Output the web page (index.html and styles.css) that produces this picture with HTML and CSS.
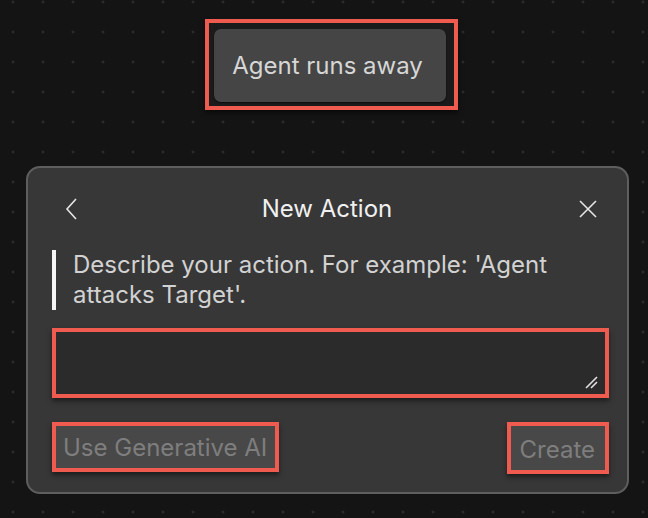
FILE: index.html
```html
<!DOCTYPE html>
<html>
<head>
<meta charset="utf-8">
<link rel="stylesheet" href="styles.css">
</head>
<body>
<div class="canvas">
  <div class="node-wrap">
    <div class="hl node-hl">
      <button class="node">Agent runs away</button>
    </div>
  </div>
  <div class="panel">
    <div class="panel-head">
      <span class="icon-btn">
        <svg width="14" height="22" viewBox="0 0 14 22"><path d="M11 1 L2 11 L11 21" fill="none" stroke="#e6e6e6" stroke-width="1.6"/></svg>
      </span>
      <div class="title">New Action</div>
      <span class="icon-btn">
        <svg width="18" height="18" viewBox="0 0 18 18"><path d="M1 1 L17 17 M17 1 L1 17" fill="none" stroke="#e6e6e6" stroke-width="1.6"/></svg>
      </span>
    </div>
    <div class="desc">Describe your action. For example: 'Agent attacks Target'.</div>
    <div class="hl field-hl">
      <div class="field">
        <svg class="grip" width="14" height="14" viewBox="0 0 14 14"><path d="M1 12 L12 1 M6 12 L12 6" stroke="#e0e0e0" stroke-width="1.6" fill="none"/></svg>
      </div>
    </div>
    <div class="actions">
      <div class="hl btn-hl"><button class="btn">Use Generative AI</button></div>
      <div class="hl btn-hl"><button class="btn btn-create">Create</button></div>
    </div>
  </div>
</div>
</body>
</html>
```
FILE: styles.css
```css
html, body {
  margin: 0;
  padding: 0;
}
body {
  width: 648px;
  height: 518px;
  overflow: hidden;
  background-color: #141414;
  background-image: radial-gradient(circle at 15px 15px, #2e2e2e 0, #2a2a2a 1px, rgba(20,20,20,0) 1.8px);
  background-size: 30px 30px;
  background-position: -2px -13px;
  font-family: Inter, "Noto Sans", sans-serif;
}
.canvas {
  display: flex;
  flex-direction: column;
  padding-top: 19px;
}
.node-wrap {
  display: flex;
  justify-content: center;
  padding-left: 14px;
}
.hl {
  border: 4px solid #ef5b4f;
  box-shadow: 0 3px 5px rgba(0,0,0,0.5);
}
.node-hl {
  padding: 6px 8px 4px 5px;
  background: #1b1b1b;
}
.node {
  display: block;
  width: 232px;
  height: 73px;
  border: none;
  border-radius: 7px;
  background: #454545;
  box-shadow: 0 1px 2px rgba(0,0,0,0.6);
  color: #d6d6d6;
  font-family: Inter, "Noto Sans", sans-serif;
  font-size: 24px;
  padding: 0 4px 0 0;
}
.panel {
  margin: 56px 19px 0 26px;
  height: 324px;
  border: 2px solid #5e5e5e;
  border-radius: 14px;
  background: #373737;
  padding: 0 18px 0 24px;
  display: flex;
  flex-direction: column;
}
.panel-head {
  height: 82px;
  display: flex;
  align-items: center;
  justify-content: space-between;
  padding: 0 11px 0 10px;
  box-sizing: border-box;
}
.icon-btn {
  display: flex;
  width: 20px;
  justify-content: center;
}
.title {
  color: #f0f0f0;
  font-size: 24px;
  padding-right: 6px;
  padding-bottom: 1px;
}
.desc {
  border-left: 4px solid #f5f5f5;
  padding: 0 0 0 17px;
  color: #d2d2d2;
  font-size: 24px;
  line-height: 30px;
  width: 500px;
  margin-bottom: 18px;
}
.field-hl {
  background: #2b2b2b;
  height: 62px;
}
.field {
  height: 100%;
  position: relative;
}
.grip {
  position: absolute;
  right: 6px;
  bottom: 4px;
}
.actions {
  margin-top: 24px;
  display: flex;
  justify-content: space-between;
  align-items: flex-start;
}
.btn-hl {
  background: #484848;
}
.btn {
  display: block;
  height: 42px;
  border: none;
  background: #484848;
  color: #7e7e7e;
  font-family: Inter, "Noto Sans", sans-serif;
  font-size: 24px;
  padding: 0 8px 0 7px;
}
.btn-create {
  padding: 2px 10px 0 9px;
  height: 44px;
}
```
